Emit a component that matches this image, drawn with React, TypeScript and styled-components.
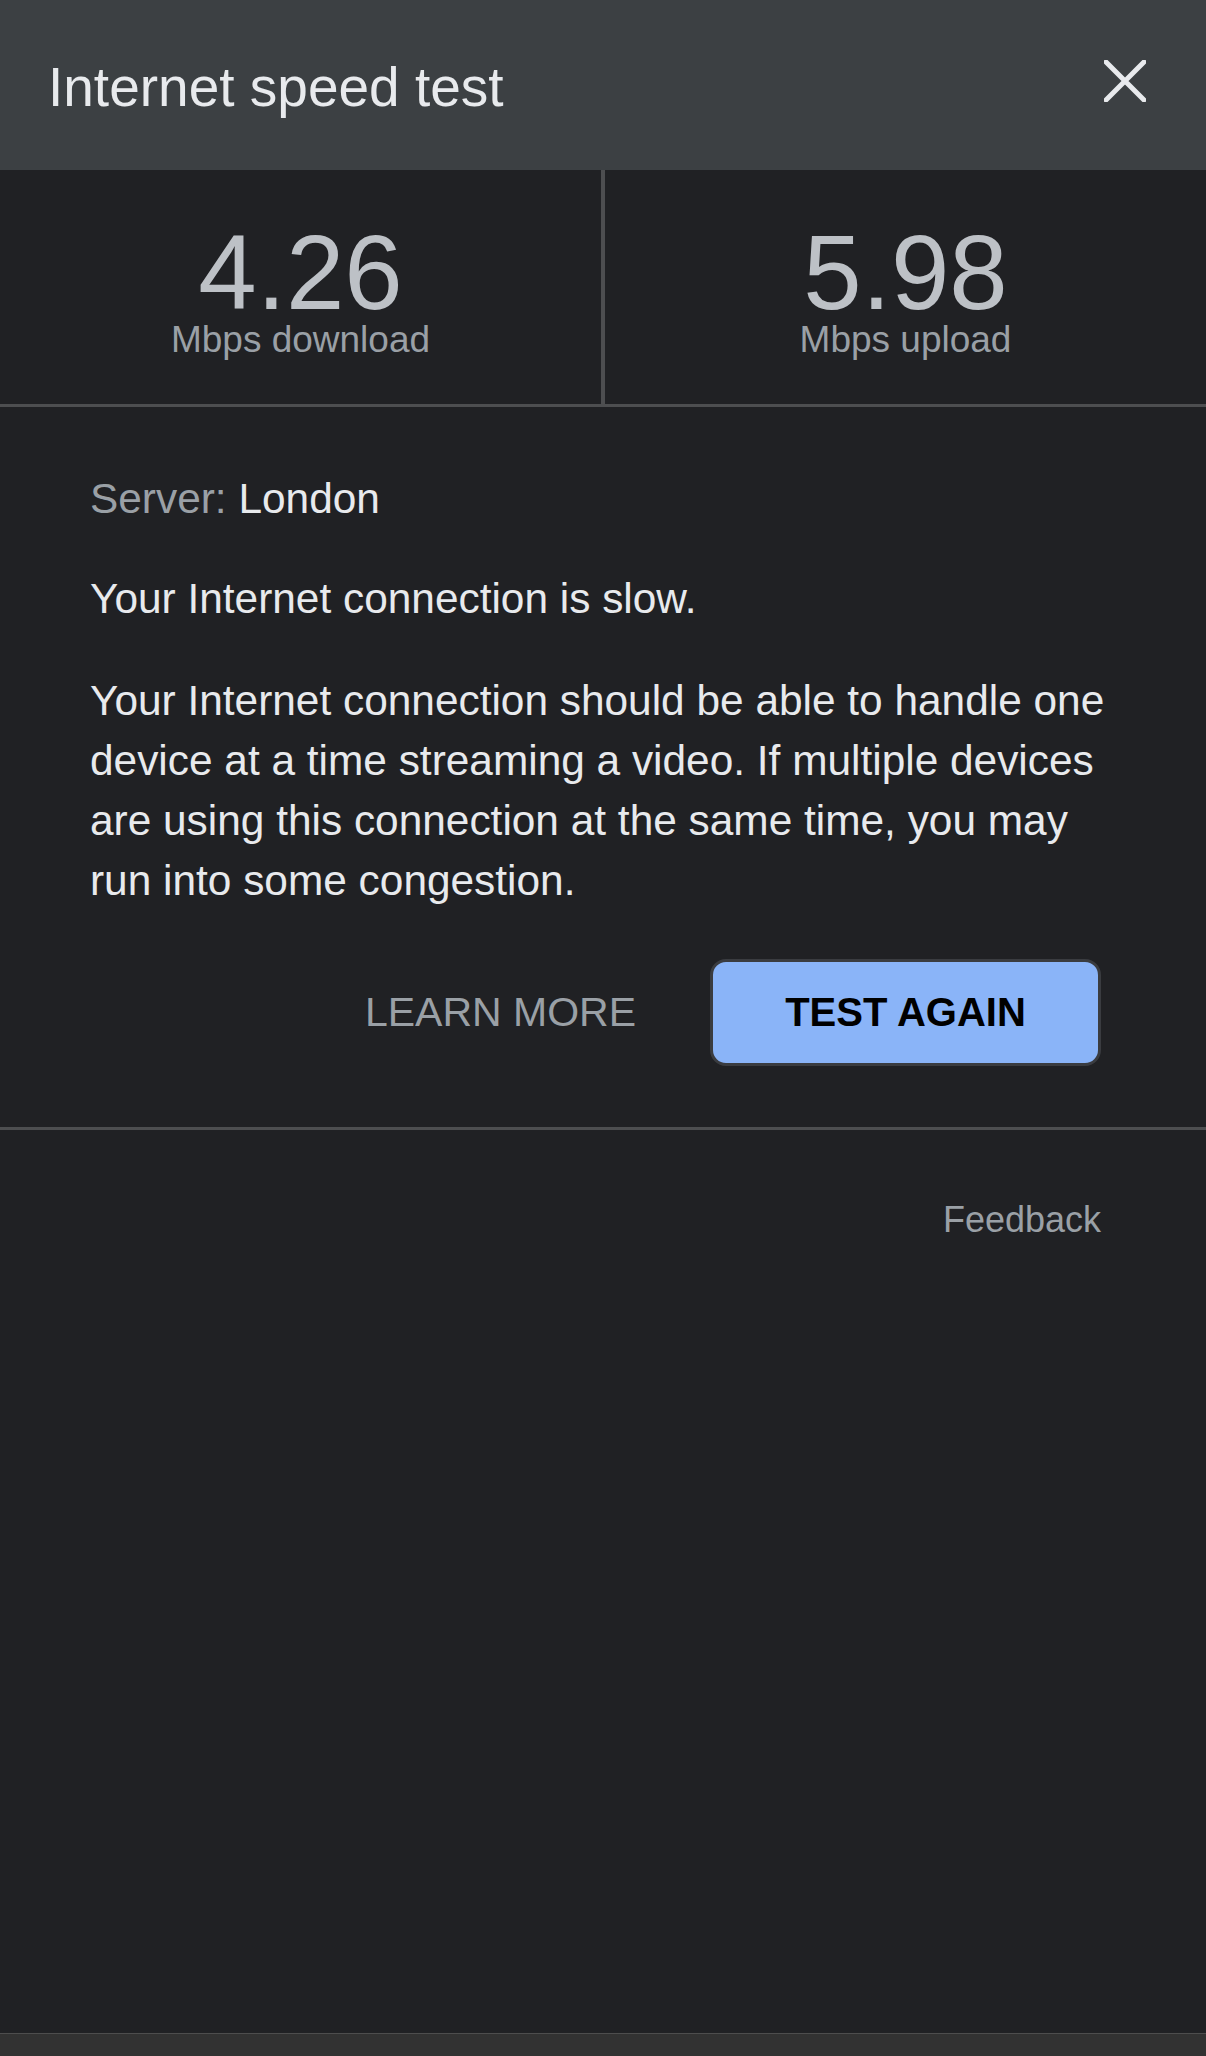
import styled, { createGlobalStyle } from 'styled-components';

const GlobalStyle = createGlobalStyle`
    html, body {
        margin: 0;
        padding: 0;
        background-color: #202124;
    }
    body {
        font-family: "Liberation Sans", Arial, sans-serif;
    }
`;

interface StatProps {
    value: string;
    label: string;
}

const Stat = ({value, label}: StatProps) => {
    return(
        <StyledStat>
            <StyledValue>{value}</StyledValue>
            <StyledLabel>{label}</StyledLabel>
        </StyledStat>
    );
}

const CloseIcon = () => (
    <svg width="42" height="42" viewBox="0 0 42 42" fill="none">
        <path d="M2 2 L40 40 M40 2 L2 40" stroke="#e8eaed" strokeWidth="5" strokeLinecap="square" />
    </svg>
);

const App = () => {
    return(
        <StyledPage>
            <GlobalStyle />
            <StyledHeader>
                <StyledTitle>Internet speed test</StyledTitle>
                <StyledClose aria-label="Close">
                    <CloseIcon />
                </StyledClose>
            </StyledHeader>

            <StyledStats>
                <Stat value="4.26" label="Mbps download" />
                <StyledDivider />
                <Stat value="5.98" label="Mbps upload" />
            </StyledStats>

            <StyledResult>
                <StyledLine>
                    <StyledMuted>Server: </StyledMuted>London
                </StyledLine>
                <StyledLine $gap={40}>Your Internet connection is slow.</StyledLine>
                <StyledLine $gap={42}>
                    Your Internet connection should be able to handle one device at a time
                    streaming a video. If multiple devices are using this connection at the
                    same time, you may run into some congestion.
                </StyledLine>
                <StyledActions>
                    <StyledTextButton>LEARN MORE</StyledTextButton>
                    <StyledPrimaryButton>TEST AGAIN</StyledPrimaryButton>
                </StyledActions>
            </StyledResult>

            <StyledFooter>
                <StyledFeedback>Feedback</StyledFeedback>
            </StyledFooter>

            <StyledBottomBar />
        </StyledPage>
    );
}

export default App;

const StyledPage = styled.div`
    min-height: 100vh;
    display: flex;
    flex-direction: column;
    background-color: #202124;
    color: #e8eaed;
`;

const StyledHeader = styled.header`
    height: 170px;
    box-sizing: border-box;
    padding: 55px 60px 0 48px;
    background-color: #3c4043;

    display: flex;
    justify-content: space-between;
    align-items: flex-start;
`;

const StyledTitle = styled.h1`
    margin: 0;
    font-size: 55px;
    line-height: 64px;
    font-weight: 400;
    color: #e8eaed;
`;

const StyledClose = styled.button`
    margin-top: 5px;
    padding: 0;
    border: none;
    background: none;
    width: 42px;
    height: 42px;
    display: flex;
    cursor: pointer;
`;

const StyledStats = styled.section`
    height: 237px;
    box-sizing: border-box;
    border-bottom: 3px solid #4d4e50;

    display: grid;
    grid-template-columns: 601px 4px 1fr;
`;

const StyledDivider = styled.div`
    background-color: #4d4e50;
`;

const StyledStat = styled.div`
    padding-top: 58px;
    display: flex;
    flex-direction: column;
    align-items: center;
    gap: 3px;
`;

const StyledValue = styled.span`
    font-size: 105px;
    line-height: 90px;
    color: #bdc1c6;
`;

const StyledLabel = styled.span`
    font-size: 37px;
    line-height: 38px;
    color: #9aa0a6;
`;

const StyledResult = styled.section`
    padding: 62px 105px 0 90px;
    border-bottom: 3px solid #4d4e50;
`;

const StyledLine = styled.p<{ $gap?: number }>`
    margin: ${({ $gap }) => $gap ?? 0}px -28px 0 0;
    font-size: 42.4px;
    line-height: 60px;
    color: #e8eaed;
`;

const StyledMuted = styled.span`
    color: #9aa0a6;
`;

const StyledActions = styled.div`
    margin-top: 48px;
    padding-bottom: 61px;
    display: flex;
    justify-content: flex-end;
    align-items: center;
    gap: 74px;
`;

const StyledTextButton = styled.button`
    padding: 0;
    border: none;
    background: none;
    font-family: "Liberation Sans", Arial, sans-serif;
    font-size: 41px;
    color: #9aa0a6;
    cursor: pointer;
`;

const StyledPrimaryButton = styled.button`
    width: 391px;
    height: 107px;
    box-sizing: border-box;
    border: 3px solid #3a3c40;
    border-radius: 16px;
    background-color: #8ab4f8;
    font-family: "Liberation Sans", Arial, sans-serif;
    font-size: 40px;
    font-weight: 700;
    color: #000;
    cursor: pointer;
`;

const StyledFooter = styled.footer`
    flex: 1;
    padding: 70px 105px 0 0;
    display: flex;
    justify-content: flex-end;
    align-items: flex-start;
`;

const StyledFeedback = styled.a`
    font-size: 36px;
    line-height: 40px;
    color: #9aa0a6;
    cursor: pointer;
`;

const StyledBottomBar = styled.div`
    height: 22px;
    border-top: 1px solid #4d4d4d;
    background-color: #323232;
`;
